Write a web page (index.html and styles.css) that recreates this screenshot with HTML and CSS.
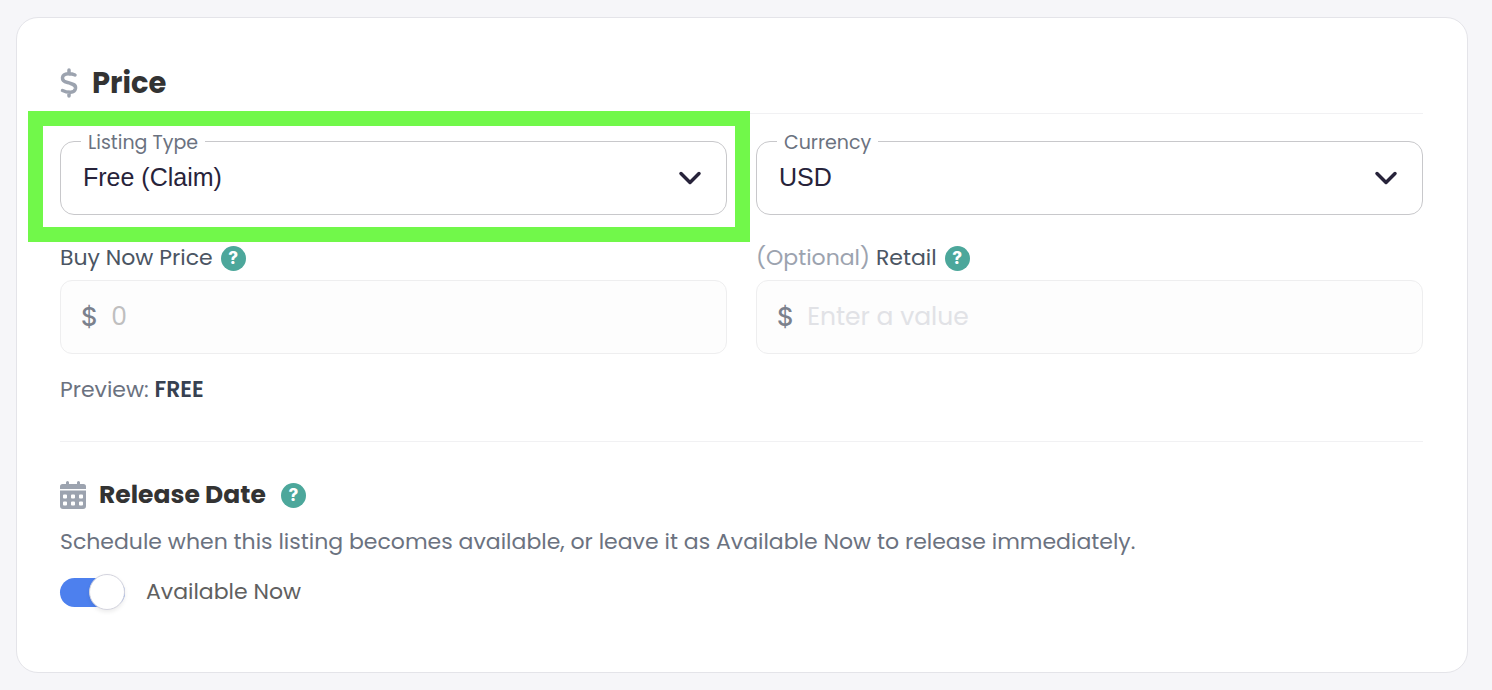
FILE: index.html
```html
<!DOCTYPE html>
<html lang="en">
  <head>
    <meta charset="UTF-8" />
    <meta name="viewport" content="width=device-width, initial-scale=1.0" />
    <title>Listing Price</title>
    <link rel="stylesheet" href="styles.css">
  </head>
  <body>
    <main class="card">
      <section>
        <div class="heading heading-price">
          <svg class="icon-dollar" viewBox="0 0 18 30" aria-hidden="true">
            <path d="M9 2v4M9 24v4M15 7C12 5.7 3.5 4.3 2.5 9.5C2 14.5 7 14 10 15.2C13 16 16 16.8 15.5 20.5C14.5 25.5 7.5 24.8 2.5 22.5" />
          </svg>
          <h2>Price</h2>
        </div>
        <div class="fields">
          <div class="select-field">
            <label for="listing-type">Listing Type</label>
            <select id="listing-type">
              <option>Free (Claim)</option>
              <option>Fixed Price</option>
            </select>
            <svg class="chevron" viewBox="0 0 24 16" aria-hidden="true">
              <path d="M3 3.5l9 9l9-9" />
            </svg>
            <div class="highlight"></div>
          </div>
          <div class="select-field">
            <label for="currency">Currency</label>
            <select id="currency">
              <option>USD</option>
              <option>EUR</option>
            </select>
            <svg class="chevron" viewBox="0 0 24 16" aria-hidden="true">
              <path d="M3 3.5l9 9l9-9" />
            </svg>
          </div>
          <div class="price-field">
            <div class="label-row">
              <label for="buy-now">Buy Now Price</label>
              <button type="button" class="help" aria-label="About buy now price">?</button>
            </div>
            <div class="input-box">
              <span class="symbol">$</span>
              <input type="text" id="buy-now" class="amount" placeholder="0" disabled />
            </div>
          </div>
          <div class="price-field">
            <div class="label-row">
              <label for="retail"><span class="optional">(Optional)</span> Retail</label>
              <button type="button" class="help" aria-label="About retail price">?</button>
            </div>
            <div class="input-box">
              <span class="symbol">$</span>
              <input type="text" id="retail" placeholder="Enter a value" disabled />
            </div>
          </div>
        </div>
        <p class="preview">Preview: <strong>FREE</strong></p>
      </section>
      <section class="release">
        <div class="heading heading-release">
          <svg class="icon-calendar" viewBox="0 0 26 30" aria-hidden="true">
            <path d="M0 9V6.5Q0 4 2.5 4H6V2.500a1.5 1.5 0 0 1 3 0V4h8V2.500a1.5 1.5 0 0 1 3 0V4h3.500Q26 4 26 6.500V9z" />
            <path fill-rule="evenodd" d="M0 10.500h26V26q0 3-3 3H3Q0 29 0 26zM4 14.500q-1 0-1 1v2q0 1 1 1h2q1 0 1-1v-2q0-1-1-1zM12 14.500q-1 0-1 1v2q0 1 1 1h2q1 0 1-1v-2q0-1-1-1zM20 14.500q-1 0-1 1v2q0 1 1 1h2q1 0 1-1v-2q0-1-1-1zM4 21.500q-1 0-1 1v2q0 1 1 1h2q1 0 1-1v-2q0-1-1-1zM12 21.500q-1 0-1 1v2q0 1 1 1h2q1 0 1-1v-2q0-1-1-1zM20 21.500q-1 0-1 1v2q0 1 1 1h2q1 0 1-1v-2q0-1-1-1z" />
          </svg>
          <h3>Release Date</h3>
          <button type="button" class="help" aria-label="About release date">?</button>
        </div>
        <p class="description">Schedule when this listing becomes available, or leave it as Available Now to release immediately.</p>
        <label class="toggle">
          <input type="checkbox" checked />
          <span>Available Now</span>
        </label>
      </section>
    </main>
  </body>
</html>
```
FILE: styles.css
```css
*,
*::before {
  box-sizing: border-box;
}
body {
  margin: 0;
  padding: 17px 24px 17px 16px;
  background-color: #f6f6f9;
  font-family: Poppins, Inter, sans-serif;
  font-size: 22px;
  line-height: 32px;
  color: #6b7280;
}
h2,
h3,
p {
  margin: 0;
}
.card {
  padding: 46px 44px 62px 43px;
  background-color: white;
  border: 1px solid #e4e4e9;
  border-radius: 22px;
}
/* Headings */
.heading {
  display: flex;
  align-items: center;
  height: 36px;
  color: #333;
}
.heading-price {
  column-gap: 14px;
  height: 50px;
  padding-bottom: 12px;
  border-bottom: 1px solid #f1f1f3;
}
.heading h2 {
  font-size: 29px;
  font-weight: 700;
}
.heading h3 {
  margin: 0 15px 0 13px;
  font-size: 25px;
  font-weight: 700;
}
.icon-dollar {
  width: 18px;
  height: 30px;
  fill: none;
  stroke: #9ca3af;
  stroke-width: 3.5;
  stroke-linecap: round;
  stroke-linejoin: round;
}
.icon-calendar {
  width: 26px;
  height: 30px;
  fill: #9ca3af;
}
.help {
  width: 25px;
  height: 25px;
  padding: 0;
  border: none;
  border-radius: 50%;
  background-color: #4ca79b;
  color: white;
  font: 800 17px/25px Inter, sans-serif;
}
/* Fields */
.fields {
  display: grid;
  grid-template-columns: 1fr 1fr;
  gap: 27px 29px;
  margin-top: 27px;
}
.select-field {
  position: relative;
}
.select-field label {
  position: absolute;
  top: -11px;
  left: 21px;
  padding: 0 7px;
  background-color: white;
  font-size: 19px;
  line-height: 26px;
}
.select-field select {
  display: block;
  width: 100%;
  height: 74px;
  padding: 0 60px 2px 22px;
  appearance: none;
  border: 1px solid #c8c8cb;
  border-radius: 14px;
  background-color: white;
  color: #27233a;
  font-family: "Liberation Sans", sans-serif;
  font-size: 25px;
}
.chevron {
  position: absolute;
  top: 29px;
  right: 25px;
  width: 24px;
  height: 16px;
  fill: none;
  stroke: #27233a;
  stroke-width: 3.5;
  stroke-linecap: round;
  stroke-linejoin: round;
  pointer-events: none;
}
.highlight {
  position: absolute;
  inset: -30px -23px -27px -32px;
  border: 15px solid #71f84a;
  pointer-events: none;
}
.label-row {
  display: flex;
  align-items: center;
  column-gap: 8px;
  margin-bottom: 6px;
  color: #4b5563;
}
.optional {
  color: #9ca3af;
}
.input-box {
  display: flex;
  align-items: center;
  column-gap: 14px;
  height: 74px;
  padding: 0 20px;
  border: 1px solid #eeeeef;
  border-radius: 12px;
  background-color: #fdfdfd;
}
.symbol {
  color: #7b818d;
  font-family: Inter, sans-serif;
  font-size: 25px;
  font-weight: 500;
}
.input-box input {
  flex: 1;
  min-width: 0;
  padding: 0;
  border: none;
  background: none;
  font: inherit;
  font-size: 25px;
}
.input-box input::placeholder {
  color: #e1e2e6;
}
.input-box .amount::placeholder {
  color: #bfbfbf;
}
.preview {
  margin-top: 20px;
  padding-bottom: 35px;
  border-bottom: 1px solid #f1f1f3;
}
.preview strong {
  color: #374151;
  font-weight: 600;
}
/* Release date */
.release {
  padding-top: 35px;
}
.description {
  margin: 13px 0 16px;
}
.toggle {
  display: flex;
  align-items: center;
  column-gap: 21px;
  height: 36px;
  color: #606060;
}
.toggle input {
  position: relative;
  width: 65px;
  height: 29px;
  margin: 0;
  appearance: none;
  border-radius: 15px;
  background-color: #d1d5db;
}
.toggle input:checked {
  background-color: #4d80ee;
}
.toggle input::before {
  content: "";
  position: absolute;
  top: -4px;
  left: 0;
  width: 36px;
  height: 36px;
  border: 1px solid #d4d4de;
  border-radius: 50%;
  background-color: white;
  box-shadow: 0 2px 4px rgba(0, 0, 0, 0.08);
}
.toggle input:checked::before {
  left: 29px;
}
```
